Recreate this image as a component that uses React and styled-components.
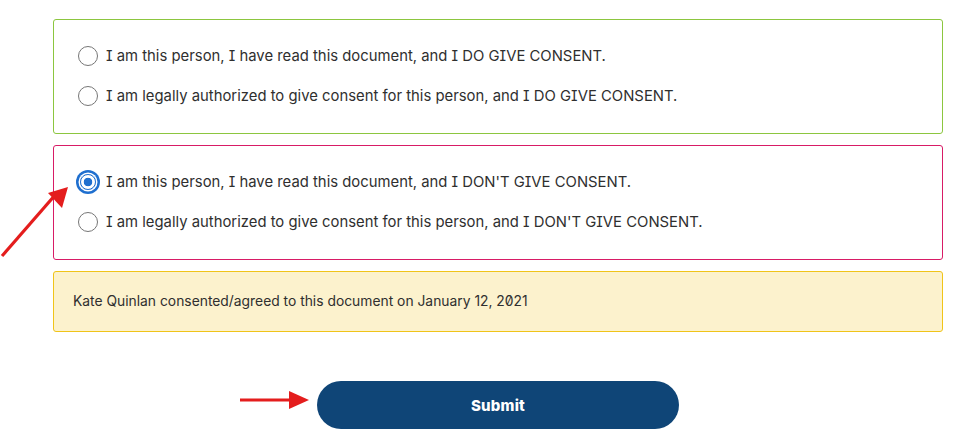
import React, { useState } from 'react';
import styled, { createGlobalStyle } from 'styled-components';

const GlobalStyle = createGlobalStyle`
  html, body {
    margin: 0;
    padding: 0;
    background: #ffffff;
  }
  body {
    font-family: Inter, 'Noto Sans', 'Liberation Sans', sans-serif;
    color: #333333;
  }
`;

const Page = styled.div`
  position: relative;
  width: 967px;
  height: 434px;
  overflow: hidden;
  box-sizing: border-box;
  padding: 19px 0 0 53px;
`;

const Column = styled.div`
  width: 890px;
  display: flex;
  flex-direction: column;
  gap: 11px;
`;

const OptionBox = styled.div`
  border: 1px solid ${props => props.color};
  border-radius: 3px;
  padding: 25px 24px 26px;
  display: flex;
  flex-direction: column;
  gap: 18px;
`;

const OptionRow = styled.label`
  display: flex;
  align-items: center;
  height: 22px;
  font-size: 14.85px;
  font-feature-settings: 'cv08';
  color: #2f2f2f;
  cursor: pointer;
`;

const RadioSlot = styled.span`
  width: 20px;
  height: 20px;
  margin-right: 8px;
  display: flex;
  align-items: center;
  justify-content: center;
  flex-shrink: 0;
`;

const RadioCircle = styled.span`
  box-sizing: border-box;
  border-radius: 50%;
  width: ${props => (props.checked ? '16px' : '20px')};
  height: ${props => (props.checked ? '16px' : '20px')};
  border: ${props => (props.checked ? '1.5px solid #1f6fcf' : '1px solid #767676')};
  background: ${props =>
    props.checked
      ? 'radial-gradient(circle, #1f6fcf 0 4px, #ffffff 4.6px)'
      : '#ffffff'};
  box-shadow: ${props =>
    props.checked ? '0 0 0 1.5px #ffffff, 0 0 0 4px #1f6fcf' : 'none'};
`;

const Notice = styled.div`
  background: #fcf2cd;
  border: 1px solid #f0c419;
  border-radius: 3px;
  padding: 19px 19px 19px;
  font-size: 13.85px;
  line-height: 21px;
  font-feature-settings: 'zero';
  color: #2f2f2f;
`;

const Actions = styled.div`
  width: 890px;
  display: flex;
  justify-content: center;
  padding-top: 49px;
`;

const SubmitButton = styled.button`
  width: 362px;
  height: 48px;
  border: none;
  border-radius: 24px;
  background: #0f4577;
  color: #ffffff;
  font-family: Inter, 'Liberation Sans', sans-serif;
  font-weight: 800;
  font-size: 15px;
  letter-spacing: 0.2px;
  cursor: pointer;
`;

const Annotation = styled.svg`
  position: absolute;
  overflow: visible;
  pointer-events: none;
`;

const giveOptions = [
  'I am this person, I have read this document, and I DO GIVE CONSENT.',
  'I am legally authorized to give consent for this person, and I DO GIVE CONSENT.',
];

const refuseOptions = [
  "I am this person, I have read this document, and I DON'T GIVE CONSENT.",
  "I am legally authorized to give consent for this person, and I DON'T GIVE CONSENT.",
];

const Option = ({ text, checked, onSelect }) => (
  <OptionRow onClick={onSelect}>
    <RadioSlot>
      <RadioCircle checked={checked} />
    </RadioSlot>
    {text}
  </OptionRow>
);

const App = () => {
  const [choice, setChoice] = useState(refuseOptions[0]);

  return (
    <>
      <GlobalStyle />
      <Page>
        <Column>
          <OptionBox color="#8cc63f">
            {giveOptions.map(t => (
              <Option key={t} text={t} checked={choice === t} onSelect={() => setChoice(t)} />
            ))}
          </OptionBox>
          <OptionBox color="#d81b66">
            {refuseOptions.map(t => (
              <Option key={t} text={t} checked={choice === t} onSelect={() => setChoice(t)} />
            ))}
          </OptionBox>
          <Notice>Kate Quinlan consented/agreed to this document on January 12, 2021</Notice>
        </Column>
        <Actions>
          <SubmitButton>Submit</SubmitButton>
        </Actions>

        {/* red annotation arrows over the form */}
        <Annotation width="80" height="100" style={{ left: 0, top: 160 }} viewBox="0 0 80 100">
          <line x1="2" y1="96" x2="56" y2="34" stroke="#e41d1d" strokeWidth="3.2" />
          <polygon points="68,27 48,33 62,48" fill="#e41d1d" />
        </Annotation>
        <Annotation width="80" height="30" style={{ left: 236, top: 385 }} viewBox="0 0 80 30">
          <line x1="4" y1="15" x2="56" y2="15" stroke="#e41d1d" strokeWidth="3" />
          <polygon points="73,15 53,6 53,24" fill="#e41d1d" />
        </Annotation>
      </Page>
    </>
  );
};

export default App;
